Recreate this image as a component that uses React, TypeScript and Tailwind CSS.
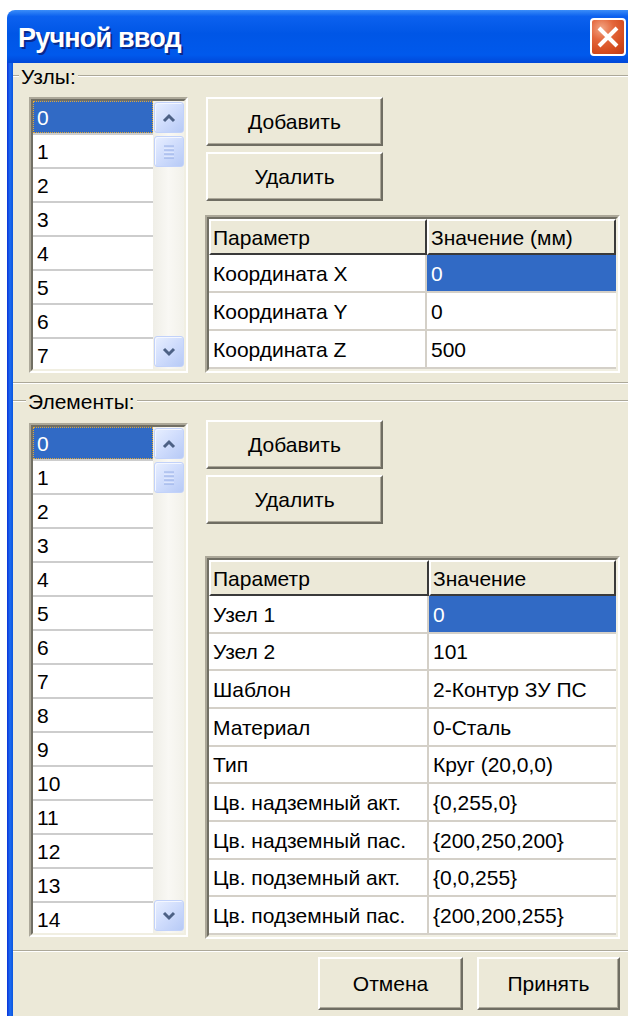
import React from "react";

type Pair = [string, string];

const nodeRows: Pair[] = [
  ["Координата X", "0"],
  ["Координата Y", "0"],
  ["Координата Z", "500"],
];

const elementRows: Pair[] = [
  ["Узел 1", "0"],
  ["Узел 2", "101"],
  ["Шаблон", "2-Контур ЗУ ПС"],
  ["Материал", "0-Сталь"],
  ["Тип", "Круг (20,0,0)"],
  ["Цв. надземный акт.", "{0,255,0}"],
  ["Цв. надземный пас.", "{200,250,200}"],
  ["Цв. подземный акт.", "{0,0,255}"],
  ["Цв. подземный пас.", "{200,200,255}"],
];

function Sunken({ className = "", children }: { className?: string; children: React.ReactNode }) {
  return (
    <div className={`border-2 border-t-[#ACA899] border-l-[#ACA899] border-r-white border-b-white ${className}`}>
      <div className="h-full overflow-hidden border-2 border-t-[#716F64] border-l-[#716F64] border-r-[#F1EFE2] border-b-[#F1EFE2] bg-white">
        {children}
      </div>
    </div>
  );
}

function PushButton({ label, className = "" }: { label: string; className?: string }) {
  return (
    <div
      className={`flex items-center justify-center border-2 border-t-white border-l-white border-r-[#6F6D62] border-b-[#6F6D62] bg-[#ECE9D8] shadow-[inset_-1px_-1px_0_#ACA899] ${className}`}
    >
      {label}
    </div>
  );
}

function ScrollButton({ dir }: { dir: "up" | "down" }) {
  return (
    <div className="flex h-[31px] w-[30px] items-center justify-center rounded-[3px] border border-[#C2D2FA] bg-[linear-gradient(135deg,#E8EFFF_0%,#CFDCFC_50%,#B7CAF6_100%)] shadow-[inset_1px_1px_0_#F4F7FF]">
      <svg width="16" height="12" viewBox="0 0 16 12">
        <path
          d={dir === "up" ? "M3 9 L8 4 L13 9" : "M3 3 L8 8 L13 3"}
          stroke="#4D6185"
          strokeWidth="3"
          fill="none"
        />
      </svg>
    </div>
  );
}

function Thumb() {
  return (
    <div className="mt-[3px] flex h-[31px] w-[30px] items-center justify-center rounded-[3px] border border-[#C2D2FA] bg-[linear-gradient(135deg,#E8EFFF_0%,#CFDCFC_50%,#B7CAF6_100%)] shadow-[inset_1px_1px_0_#F4F7FF]">
      <svg width="12" height="14" viewBox="0 0 12 14">
        {[1, 5, 9, 13].map((y) => (
          <g key={y}>
            <line x1="1" x2="11" y1={y - 1} y2={y - 1} stroke="#EEF3FE" strokeWidth="1" />
            <line x1="1" x2="11" y1={y} y2={y} stroke="#8FA8E4" strokeWidth="1" />
          </g>
        ))}
      </svg>
    </div>
  );
}

function ScrollBar() {
  return (
    <div className="flex h-full flex-1 flex-col items-center bg-[linear-gradient(to_right,#EFEEE7,#F9F8F4_50%,#F2F1EA)] pt-[1px] pb-[2px]">
      <ScrollButton dir="up" />
      <Thumb />
      <div className="flex-1" />
      <ScrollButton dir="down" />
    </div>
  );
}

function ListBox({ count, className = "" }: { count: number; className?: string }) {
  return (
    <Sunken className={`w-[159px] shrink-0 ${className}`}>
      <div className="flex h-full">
        <div className="flex w-[120px] flex-col">
          {Array.from({ length: count }, (_, i) => (
            <div key={i} className="h-[34px] shrink-0 border-b-2 border-[#CDCDCD] bg-white">
              {i === 0 ? (
                <div className="flex h-full items-center border border-dotted border-[#E0A838] bg-[#316AC5] pl-[3px] text-white">
                  {i}
                </div>
              ) : (
                <div className="flex h-full items-center pl-[4px]">{i}</div>
              )}
            </div>
          ))}
        </div>
        <ScrollBar />
      </div>
    </Sunken>
  );
}

function PropTable({
  head,
  rows,
  col1,
  heights,
  className = "",
}: {
  head: Pair;
  rows: Pair[];
  col1: string;
  heights: string[];
  className?: string;
}) {
  return (
    <Sunken className={className}>
      <div className="flex h-[36px] bg-[#ECE9D8]">
        <div className={`flex ${col1} shrink-0 items-center border-2 border-t-white border-l-white border-r-[#3A3A3A] border-b-[#3A3A3A] pl-[2px]`}>
          {head[0]}
        </div>
        <div className="flex flex-1 items-center border-2 border-t-white border-l-white border-r-[#3A3A3A] border-b-[#3A3A3A] pl-[2px]">
          {head[1]}
        </div>
      </div>
      {rows.map(([a, b], i) => (
        <div key={a} className={`flex ${heights[i]}`}>
          <div className={`flex ${col1} shrink-0 items-center border-r-2 border-b-2 border-[#D4D0C8] pl-[4px]`}>{a}</div>
          <div
            className={`flex flex-1 items-center border-b-2 border-[#D4D0C8] pl-[4px] ${
              i === 0 ? "bg-[#316AC5] text-white" : ""
            }`}
          >
            {b}
          </div>
        </div>
      ))}
    </Sunken>
  );
}

function CloseButton() {
  return (
    <div className="flex h-[38px] w-[36px] items-center justify-center rounded-[4px] border-2 border-white bg-[radial-gradient(circle_at_30%_25%,#F2A685_0%,#E4673C_35%,#D44C1F_70%,#BA3A19_100%)]">
      <svg width="24" height="22" viewBox="0 0 24 22">
        <path d="M3 2 L21 20 M21 2 L3 20" stroke="white" strokeWidth="4" fill="none" />
      </svg>
    </div>
  );
}

export default function App() {
  return (
    <div className="h-[1016px] w-[628px] overflow-hidden bg-white font-['Liberation_Sans',Arial,sans-serif] text-[21px] leading-none text-black">
      <div className="mt-[10px] ml-[7px] flex w-[621px] flex-col">
        {/* title bar */}
        <div className="flex h-[53px] items-center justify-between rounded-tl-[8px] bg-[linear-gradient(to_bottom,#3B8DF8_0%,#0C61EF_12%,#0056E6_45%,#0059EC_85%,#0047D8_100%)] pr-[2px] pl-[11px]">
          <span className="mt-[4px] text-[27px] font-bold tracking-[-0.8px] text-white [text-shadow:2px_2px_0_#0A2A8C]">
            Ручной ввод
          </span>
          <CloseButton />
        </div>

        <div className="flex">
          <div className="h-[953px] w-[6px] bg-[linear-gradient(to_right,#0831D9,#1E6CF0_50%,#0A56DE)]" />
          <div className="flex h-[953px] flex-1 flex-col bg-[#ECE9D8] pt-[12px]">
            {/* nodes group */}
            <div className="relative border-y border-[#ACA899] pt-[21px] pr-[8px] pb-[9px] pl-[16px] shadow-[inset_0_1px_0_#fff,0_1px_0_#fff]">
              <div className="absolute top-[-12px] left-[6px] flex h-[24px] items-center bg-[#ECE9D8] px-[2px]">Узлы:</div>
              <div className="flex gap-[17px]">
                <ListBox count={8} className="h-[276px]" />
                <div className="flex w-[415px] flex-col">
                  <PushButton label="Добавить" className="ml-[1px] h-[49px] w-[177px]" />
                  <PushButton label="Удалить" className="mt-[6px] ml-[1px] h-[49px] w-[177px]" />
                  <PropTable
                    className="mt-[14px]"
                    head={["Параметр", "Значение (мм)"]}
                    rows={nodeRows}
                    col1="w-[218px]"
                    heights={["h-[38px]", "h-[38px]", "h-[38px]"]}
                  />
                </div>
              </div>
            </div>

            {/* elements group */}
            <div className="relative mt-[17px] border-y border-[#ACA899] pt-[19px] pr-[8px] pb-[11px] pl-[16px] shadow-[inset_0_1px_0_#fff,0_1px_0_#fff]">
              <div className="absolute top-[-12px] left-[13px] flex h-[24px] items-center bg-[#ECE9D8] px-[2px]">Элементы:</div>
              <div className="flex gap-[17px]">
                <ListBox count={15} className="mt-[3px] h-[514px]" />
                <div className="flex w-[415px] flex-col">
                  <PushButton label="Добавить" className="ml-[1px] h-[49px] w-[177px]" />
                  <PushButton label="Удалить" className="mt-[6px] ml-[1px] h-[49px] w-[177px]" />
                  <PropTable
                    className="mt-[32px]"
                    head={["Параметр", "Значение"]}
                    rows={elementRows}
                    col1="w-[220px]"
                    heights={[
                      "h-[38px]",
                      "h-[37px]",
                      "h-[38px]",
                      "h-[38px]",
                      "h-[37px]",
                      "h-[38px]",
                      "h-[38px]",
                      "h-[37px]",
                      "h-[38px]",
                    ]}
                  />
                </div>
              </div>
            </div>

            {/* dialog buttons */}
            <div className="mt-[6px] flex justify-end gap-[14px] pr-[8px]">
              <PushButton label="Отмена" className="h-[53px] w-[145px]" />
              <PushButton label="Принять" className="h-[53px] w-[143px]" />
            </div>
          </div>
        </div>
      </div>
    </div>
  );
}
